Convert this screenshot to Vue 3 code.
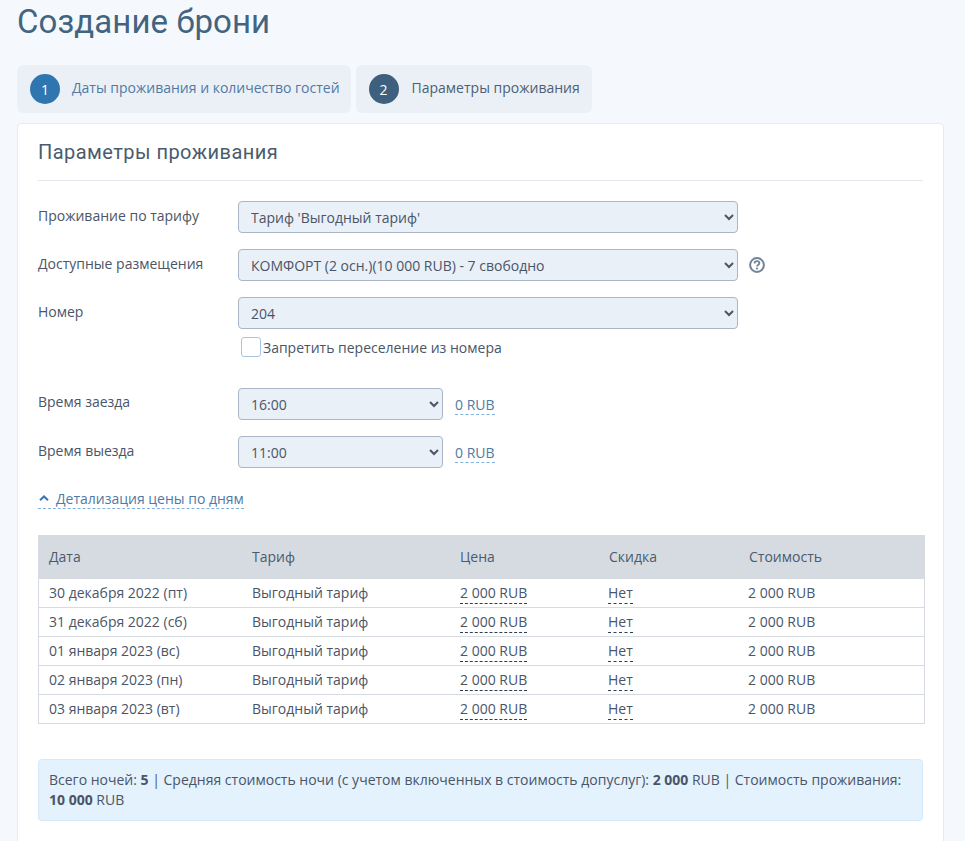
<script setup>
const days = [
  '30 декабря 2022 (пт)',
  '31 декабря 2022 (сб)',
  '01 января 2023 (вс)',
  '02 января 2023 (пн)',
  '03 января 2023 (вт)',
]
</script>

<template>
  <main class="page">
    <h1>Создание брони</h1>

    <nav class="steps">
      <div class="step">
        <span class="num done">1</span>
        <span class="step-text link">Даты проживания и количество гостей</span>
      </div>
      <div class="step">
        <span class="num">2</span>
        <span class="step-text">Параметры проживания</span>
      </div>
    </nav>

    <section class="card">
      <h2>Параметры проживания</h2>

      <div class="row">
        <label>Проживание по тарифу</label>
        <select class="wide"><option>Тариф 'Выгодный тариф'</option></select>
      </div>

      <div class="row">
        <label>Доступные размещения</label>
        <select class="wide"><option>КОМФОРТ (2 осн.)(10 000 RUB) - 7 свободно</option></select>
        <svg class="help" width="16" height="16" viewBox="0 0 16 16" fill="none">
          <circle cx="8" cy="8" r="6.9" stroke="#6f8497" stroke-width="2" />
          <path d="M5.6 6.4C5.6 5.1 6.7 4.2 8 4.2C9.4 4.2 10.4 5.1 10.4 6.2C10.4 7.8 8 7.7 8 9.5" stroke="#6f8497" stroke-width="1.8" />
          <circle cx="8" cy="11.6" r="1.05" fill="#6f8497" />
        </svg>
      </div>

      <div class="row room">
        <label>Номер</label>
        <select class="wide"><option>204</option></select>
      </div>
      <div class="check-row">
        <span class="check"></span>
        <span>Запретить переселение из номера</span>
      </div>

      <div class="row">
        <label class="arrival">Время заезда</label>
        <select class="short"><option>16:00</option></select>
        <span class="price-link">0 RUB</span>
      </div>

      <div class="row">
        <label>Время выезда</label>
        <select class="short"><option>11:00</option></select>
        <span class="price-link">0 RUB</span>
      </div>

      <div class="toggle-wrap">
        <span class="toggle">
          <svg width="12" height="8" viewBox="0 0 12 8" fill="none">
            <path d="M2 6.2L6 2.4L10 6.2" stroke="#3a78b0" stroke-width="2" />
          </svg>
          Детализация цены по дням
        </span>
      </div>

      <table>
        <thead>
          <tr>
            <th class="c1">Дата</th>
            <th class="c2">Тариф</th>
            <th class="c3">Цена</th>
            <th class="c4">Скидка</th>
            <th class="c5">Стоимость</th>
          </tr>
        </thead>
        <tbody>
          <tr v-for="day in days" :key="day">
            <td>{{ day }}</td>
            <td class="near">Выгодный тариф</td>
            <td><span class="dashed">2 000 RUB</span></td>
            <td class="tight"><span class="dashed">Нет</span></td>
            <td class="tight">2 000 RUB</td>
          </tr>
        </tbody>
      </table>

      <div class="summary">
        Всего ночей: <b>5</b> | Средняя стоимость ночи (с учетом включенных в стоимость допуслуг): <b>2 000</b> RUB | Стоимость проживания: <b>10 000</b> RUB
      </div>
    </section>
  </main>
</template>

<style>
html, body {
  background: #f5f9fd;
}
</style>

<style scoped>
.page {
  padding: 0 21px 0 17px;
  height: 841px;
  overflow: hidden;
  box-sizing: border-box;
  font-family: "Open Sans", sans-serif;
  font-size: 14px;
  color: #4a5568;
}

h1 {
  margin: 0;
  padding-top: 3px;
  height: 65px;
  box-sizing: border-box;
  font-family: Roboto, sans-serif;
  font-weight: 400;
  font-size: 33px;
  letter-spacing: 0.08px;
  line-height: 38px;
  color: #436480;
}

.steps {
  display: flex;
  gap: 5px;
  margin-bottom: 10px;
}

.step {
  display: flex;
  align-items: center;
  gap: 12px;
  height: 48px;
  padding: 0 11px 0 13px;
  background: #ebf0f6;
  border-radius: 6px;
  color: #4b6074;
}

.step:last-child {
  gap: 13px;
  padding-right: 12px;
}

.step-text {
  padding-bottom: 3px;
}

.link {
  color: #4f7aa5;
}

.num {
  width: 30px;
  height: 30px;
  border-radius: 50%;
  background: #3e5f7d;
  color: #fff;
  display: flex;
  align-items: center;
  justify-content: center;
  font-size: 14px;
}

.num.done {
  background: #2f75b0;
}

.card {
  background: #fff;
  border: 1px solid #e3ebf3;
  border-radius: 4px;
  padding: 0 20px 20px;
  height: 800px;
}

h2 {
  margin: 0 0 20px;
  height: 57px;
  padding-top: 14px;
  box-sizing: border-box;
  border-bottom: 1px solid #e3e8ee;
  font-family: Roboto, sans-serif;
  font-weight: 400;
  font-size: 20px;
  letter-spacing: 0.45px;
  line-height: 28px;
  color: #4a5b6e;
}

.row {
  display: flex;
  align-items: flex-start;
  height: 32px;
  margin-bottom: 16px;
}

.row label {
  width: 200px;
  flex: none;
  line-height: 29px;
}

.row label.arrival {
  line-height: 27px;
}

select {
  height: 32px;
  padding: 0 8px;
  border: 1px solid #a9b6c6;
  border-radius: 4px;
  background-color: #e9f0f8;
  color: #4a5568;
  font-family: "Open Sans", sans-serif;
  font-size: 14px;
}

.wide {
  width: 500px;
}

.short {
  width: 205px;
}

.help {
  margin: 8px 0 0 11px;
}

.room {
  margin-bottom: 8px;
}

.check-row {
  display: flex;
  align-items: center;
  height: 20px;
  margin: 0 0 31px 203px;
  gap: 2px;
}

.check {
  width: 18px;
  height: 18px;
  background: #fff;
  border: 1px solid #a9c4e0;
  border-radius: 3px;
}

.price-link {
  margin: 7px 0 0 12px;
  color: #4f7aa5;
  line-height: 19px;
  border-bottom: 1px dashed #7fb0de;
}

.toggle-wrap {
  padding-top: 3px;
  height: 22px;
  margin-bottom: 26px;
}

.toggle {
  display: inline-flex;
  align-items: center;
  gap: 6px;
  height: 20px;
  color: #4f7aa5;
  border-bottom: 1px dashed #7fb0de;
}

table {
  width: 887px;
  border-collapse: collapse;
  table-layout: fixed;
  margin-bottom: 35px;
}

th {
  height: 43px;
  padding: 0 10px;
  background: #d6dbe2;
  font-weight: 400;
  text-align: left;
  color: #4a5b6e;
}

th.c1 {
  border-left: 1px solid #d6dbe2;
}

th.c2,
th.c4,
th.c5 {
  padding-left: 9px;
}

th.c5 {
  border-right: 1px solid #d6dbe2;
}

td {
  height: 29px;
  padding: 0 10px 2px;
  box-sizing: border-box;
  border-top: 1px solid #d6dbe2;
  border-bottom: 1px solid #d6dbe2;
}

td.near {
  padding-left: 9px;
}

td.tight {
  padding-left: 8px;
}

tbody tr td:first-child {
  border-left: 1px solid #d6dbe2;
}

tbody tr td:last-child {
  border-right: 1px solid #d6dbe2;
}

.c1 {
  width: 184px;
}

.c2 {
  width: 188px;
}

.c3 {
  width: 130px;
}

.c4 {
  width: 121px;
}

.dashed {
  padding-bottom: 1px;
  border-bottom: 1px dashed #2c3e50;
}

.summary {
  width: 885px;
  box-sizing: border-box;
  padding: 10px;
  background: #e3f2fd;
  border: 1px solid #d5e9f9;
  border-radius: 4px;
  line-height: 20px;
}

b {
  font-weight: 700;
}
</style>
